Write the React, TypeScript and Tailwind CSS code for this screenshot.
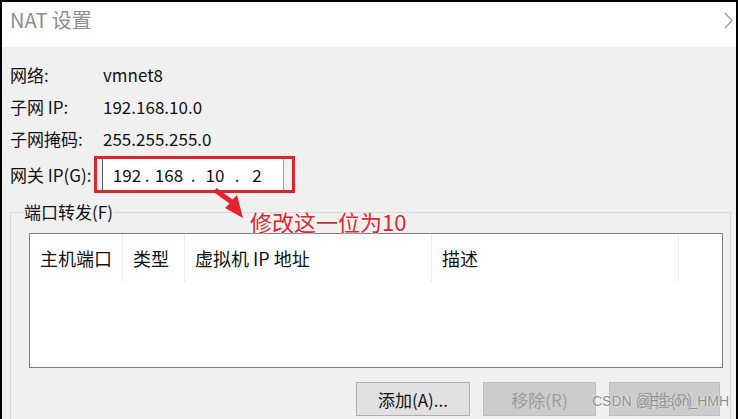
import React from "react";

const font = "font-['Microsoft_YaHei','Noto_Sans_CJK_SC',sans-serif]";

const rows = [
  { label: "网络:", value: "vmnet8" },
  { label: "子网 IP:", value: "192.168.10.0" },
  { label: "子网掩码:", value: "255.255.255.0" },
];

const columns = [
  { title: "主机端口", w: "w-[93px]" },
  { title: "类型", w: "w-[62px]" },
  { title: "虚拟机 IP 地址", w: "w-[247px]" },
  { title: "描述", w: "w-[247px]" },
];

const App = () => {
  return (
    <div className={`relative w-[740px] h-[419px] overflow-hidden bg-white ${font}`}>
      <div className="flex flex-col w-[738px] h-[419px] border-t-2 border-l-2 border-r-2 border-black">
        {/* title bar */}
        <div className="flex shrink-0 justify-between h-[45px] bg-white">
          <span className="ml-[8px] mt-[4px] text-[20px] leading-[28px] text-[#8d8d8d]">
            NAT 设置
          </span>
          <svg width="9" height="17" viewBox="0 0 9 17" className="mt-[10px] mr-[3px]">
            <path d="M1 1 L8 8.5 L1 16" fill="none" stroke="#9a9a9a" strokeWidth="1.3" />
          </svg>
        </div>

        {/* body */}
        <div className="flex-1 min-h-0 overflow-hidden bg-[#f0f0f0] pt-[11px] pl-[8px] text-[17px] text-[#111]">
          {rows.map((r) => (
            <div key={r.label} className="flex items-center h-8">
              <span className="w-[93px] leading-none">{r.label}</span>
              <span className="leading-none">{r.value}</span>
            </div>
          ))}

          <div className="flex items-center h-[40px]">
            <span className="w-[84px] whitespace-nowrap leading-none">网关 IP(G):</span>
            <div className="flex shrink-0 w-[201px] h-[37px] border-[3px] border-[#e5222c]">
              <div className="flex items-center ml-[5px] w-[182px] h-full bg-white border-l border-l-[#5a5a5a] border-r border-r-[#a0a0a0] pl-[9px] leading-none">
                <span className="w-[30px] text-center">192</span>
                <span className="w-[10px] text-center">.</span>
                <span className="w-[34px] text-center">168</span>
                <span className="w-[14px] text-center">.</span>
                <span className="w-[30px] text-center">10</span>
                <span className="w-[14px] text-center">.</span>
                <span className="w-[26px] text-center">2</span>
              </div>
            </div>
          </div>

          {/* port forwarding group */}
          <fieldset className="mt-[8px] w-[721px] h-[240px] border border-[#d9d9d9]">
            <legend className="ml-[12px] px-[1px] text-[17px] leading-[20px]">端口转发(F)</legend>
            <div className="ml-[18px] w-[694px] mt-[11px]">
              <div className="h-[135px] bg-white border border-[#7f7f7f]">
                <div className="flex h-[48px] text-[18px]">
                  {columns.map((c) => (
                    <div key={c.title} className={`flex items-center ${c.w} pl-[10px] border-r border-[#ececec] leading-none`}>
                      {c.title}
                    </div>
                  ))}
                </div>
              </div>
              <div className="flex justify-end gap-[13px] pr-[3px] mt-[14px] text-[17px]">
                <button className="w-[114px] h-[34px] bg-[#e1e1e1] border border-[#adadad] leading-none">
                  添加(A)...
                </button>
                <button className="w-[113px] h-[34px] bg-[#cccccc] border border-[#bfbfbf] text-[#9c9c9c] leading-none">
                  移除(R)
                </button>
                <button className="w-[111px] h-[34px] bg-[#cccccc] border border-[#bfbfbf] text-[#9c9c9c] leading-none">
                  属性(P)
                </button>
              </div>
            </div>
          </fieldset>
        </div>
      </div>

      {/* annotation arrow */}
      <svg width="45" height="40" viewBox="0 0 45 40" className="absolute left-[205px] top-[185px]">
        <path d="M11.5 3 L27.5 14.5 L32 10 L38 33 L20 23 L24.5 18.5 L8.5 7 Z" fill="#e5222c" />
      </svg>
      <span className="absolute left-[250px] top-[210px] text-[22px] leading-none text-[#e5222c] [text-shadow:0_0_2px_#fff,0_0_2px_#fff]">
        修改这一位为10
      </span>

      <span className="absolute left-[592px] top-[394px] font-['Liberation_Sans',sans-serif] text-[14px] leading-none text-[#8f8f8f] [text-shadow:0_0_2px_#fff]">
        CSDN @Eason_HMH
      </span>
    </div>
  );
};

export default App;
